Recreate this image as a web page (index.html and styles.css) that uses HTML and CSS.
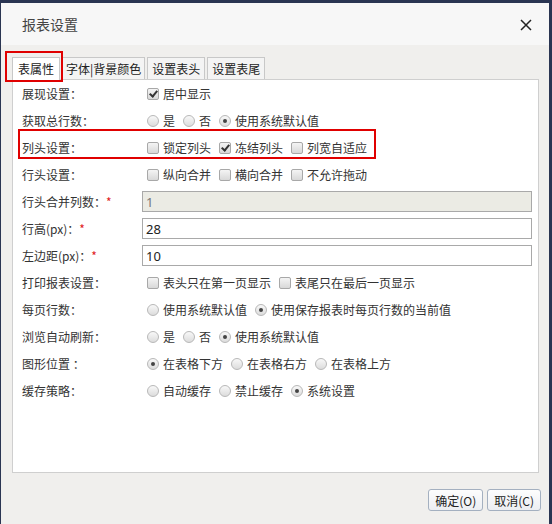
FILE: index.html
```html
<!DOCTYPE html>
<html lang="zh-CN">
<head>
  <meta charset="UTF-8">
  <title>报表设置</title>
  <link rel="stylesheet" href="styles.css">
</head>
<body>
  <div class="dialog">
    <div class="dialog-head">
      <span class="dialog-title">报表设置</span>
      <svg class="close" width="14" height="14" viewBox="0 0 14 14">
        <path d="M2 2 L12 12 M12 2 L2 12" stroke="#222" stroke-width="1.5" fill="none"/>
      </svg>
    </div>

    <div class="dialog-body">
      <div class="tabs">
        <span class="tab active">表属性</span>
        <span class="tab">字体|背景颜色</span>
        <span class="tab">设置表头</span>
        <span class="tab">设置表尾</span>
      </div>
      <div class="mark mark-tab"></div>

      <div class="panel">
        <div class="row">
          <span class="label">展现设置：</span>
          <span class="opt"><i class="chk on"></i>居中显示</span>
        </div>
        <div class="row">
          <span class="label">获取总行数：</span>
          <span class="opt"><i class="rad"></i>是</span>
          <span class="opt"><i class="rad"></i>否</span>
          <span class="opt"><i class="rad on"></i>使用系统默认值</span>
        </div>
        <div class="row">
          <span class="label">列头设置：</span>
          <span class="opt"><i class="chk"></i>锁定列头</span>
          <span class="opt"><i class="chk on"></i>冻结列头</span>
          <span class="opt"><i class="chk"></i>列宽自适应</span>
        </div>
        <div class="row">
          <span class="label">行头设置：</span>
          <span class="opt"><i class="chk"></i>纵向合并</span>
          <span class="opt"><i class="chk"></i>横向合并</span>
          <span class="opt"><i class="chk"></i>不允许拖动</span>
        </div>
        <div class="row">
          <span class="label">行头合并列数：<em>*</em></span>
          <input class="field" value="1" disabled>
        </div>
        <div class="row">
          <span class="label">行高(px)：<em>*</em></span>
          <input class="field" value="28">
        </div>
        <div class="row">
          <span class="label">左边距(px)：<em>*</em></span>
          <input class="field" value="10">
        </div>
        <div class="row">
          <span class="label">打印报表设置：</span>
          <span class="opt"><i class="chk"></i>表头只在第一页显示</span>
          <span class="opt"><i class="chk"></i>表尾只在最后一页显示</span>
        </div>
        <div class="row">
          <span class="label">每页行数：</span>
          <span class="opt"><i class="rad"></i>使用系统默认值</span>
          <span class="opt"><i class="rad on"></i>使用保存报表时每页行数的当前值</span>
        </div>
        <div class="row">
          <span class="label">浏览自动刷新：</span>
          <span class="opt"><i class="rad"></i>是</span>
          <span class="opt"><i class="rad"></i>否</span>
          <span class="opt"><i class="rad on"></i>使用系统默认值</span>
        </div>
        <div class="row">
          <span class="label">图形位置 ：</span>
          <span class="opt"><i class="rad on"></i>在表格下方</span>
          <span class="opt"><i class="rad"></i>在表格右方</span>
          <span class="opt"><i class="rad"></i>在表格上方</span>
        </div>
        <div class="row">
          <span class="label">缓存策略：</span>
          <span class="opt"><i class="rad"></i>自动缓存</span>
          <span class="opt"><i class="rad"></i>禁止缓存</span>
          <span class="opt"><i class="rad on"></i>系统设置</span>
        </div>
        <div class="mark mark-row"></div>
      </div>

      <div class="actions">
        <button>确定(O)</button>
        <button>取消(C)</button>
      </div>
    </div>
  </div>
</body>
</html>
```

FILE: styles.css
```css
body {
  margin: 0;
  background: #2a3552;
  font-family: "Noto Sans CJK SC", "Noto Sans", sans-serif;
  font-size: 12px;
  color: #333;
}

.dialog {
  margin: 3px 0 0 1px;
  width: 548px;
  height: 521px;
  background: #f0efed;
  display: flex;
  flex-direction: column;
}

.dialog-head {
  height: 42px;
  background: #f7f7f7;
  display: flex;
  align-items: center;
  justify-content: space-between;
  padding: 0 16px 0 21px;
}

.dialog-title {
  font-size: 14px;
  color: #444;
}

.close {
  margin-top: 2px;
}

.dialog-body {
  position: relative;
  padding: 12px 10px 0 11px;
}

/* tabs */
.tabs {
  display: flex;
  gap: 2px;
  height: 23px;
}

.tab {
  border: 1px solid #c8c8c8;
  border-bottom: none;
  background: #f4f4f4;
  padding: 0 4px;
  line-height: 22px;
  color: #222;
}

.tab.active {
  background: #fff;
  height: 23px;
  position: relative;
  z-index: 1;
  padding: 0 5px;
}

.tab:nth-child(2) {
  padding: 0 3px;
}

.panel {
  position: relative;
  background: #fff;
  border: 1px solid #cfcfcf;
  margin-top: -1px;
  height: 392px;
  padding-left: 9px;
}

.row {
  display: flex;
  align-items: center;
  height: 27px;
}

.label {
  width: 120px;
  flex-shrink: 0;
}

.label em {
  font-style: normal;
  color: #e02020;
}

.opt {
  display: flex;
  align-items: center;
  margin-left: 5px;
  margin-right: 3px;
}

.chk, .rad {
  display: inline-block;
  width: 10px;
  height: 10px;
  margin-right: 4px;
  border: 1px solid #a8a8a8;
  background: linear-gradient(#f4f4f4, #d8d8d8);
  position: relative;
}

.chk {
  border-radius: 2px;
}

.chk.on::after {
  content: "";
  position: absolute;
  left: 3px;
  top: 0;
  width: 3px;
  height: 6px;
  border: solid #333;
  border-width: 0 2px 2px 0;
  transform: rotate(40deg);
}

.rad {
  border-radius: 50%;
  border-color: #b8b8b8;
  background: linear-gradient(#f8f8f8, #dcdcdc);
}

.rad.on::after {
  content: "";
  position: absolute;
  left: 3px;
  top: 3px;
  width: 4px;
  height: 4px;
  border-radius: 50%;
  background: #444;
}

.field {
  width: 390px;
  height: 21px;
  box-sizing: border-box;
  border: 1px solid #a9a9a9;
  padding: 0 3px;
  font-family: "Noto Sans", sans-serif;
  font-size: 13px;
  color: #222;
  background: #fff;
}

.field:disabled {
  background: #ebebe4;
  color: #777;
}

/* red annotation frames */
.mark {
  position: absolute;
  border: 2px solid #e00000;
  pointer-events: none;
}

.mark-tab {
  left: 4px;
  top: 6px;
  width: 54px;
  height: 27px;
  z-index: 2;
}

.mark-row {
  left: 5px;
  top: 49px;
  width: 354px;
  height: 26px;
}

.actions {
  display: flex;
  justify-content: flex-end;
  gap: 4px;
  margin-top: 16px;
  margin-right: -2px;
}

.actions button {
  height: 22px;
  padding: 0 6px;
  font-family: "Noto Sans CJK SC", sans-serif;
  font-size: 12px;
  color: #222;
  border: 1px solid #a4b0c0;
  border-radius: 3px;
  background: linear-gradient(#fdfdfd, #eceef2);
}
```
